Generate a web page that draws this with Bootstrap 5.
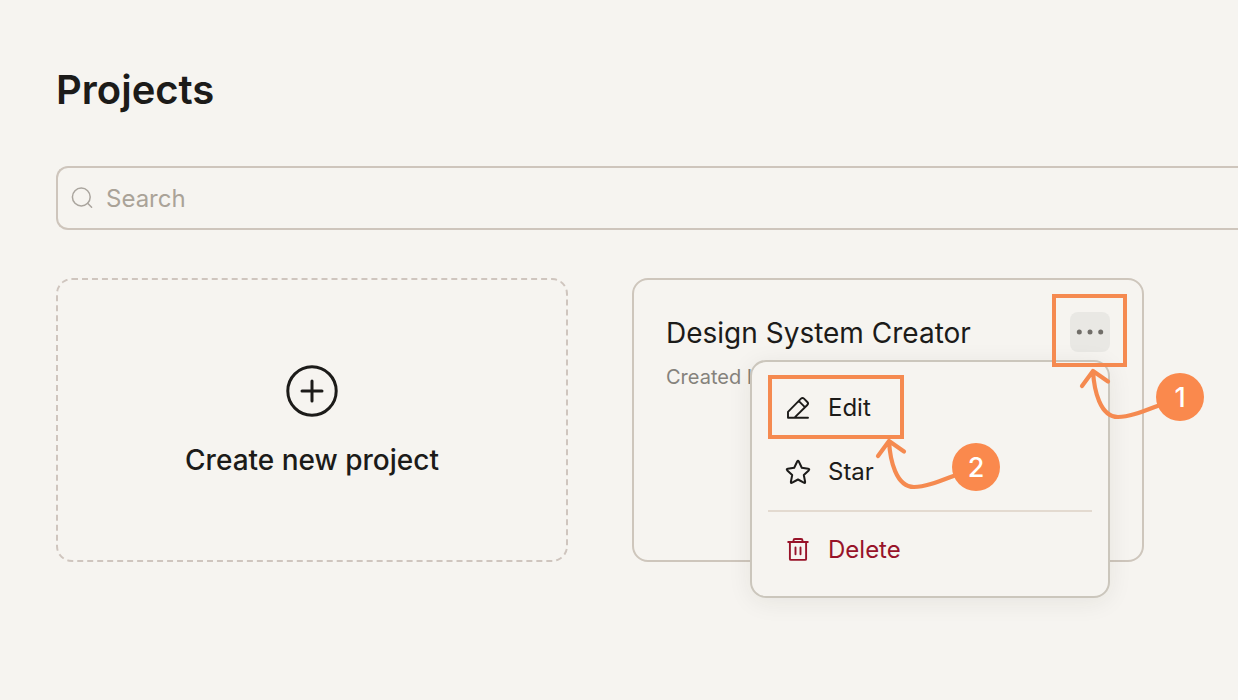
<!DOCTYPE html>
<html lang="en">
<head>
<meta charset="utf-8">
<meta name="viewport" content="width=device-width, initial-scale=1">
<title>Projects</title>
<link href="https://cdn.jsdelivr.net/npm/bootstrap@5.3.0/dist/css/bootstrap.min.css" rel="stylesheet">
<style>
  body { background: #f6f4f0; color: #1c1b19; font-family: Inter, sans-serif; height: 700px; overflow: hidden; }
  svg { display: block; flex: none; }
  .page { padding: 66px 0 0 56px; }
  .page-title { font-size: 40px; line-height: 48px; font-weight: 600; margin-bottom: 52px; }
  .search-box { height: 64px; border: 2px solid #cec5bc; border-right: 0; border-radius: 12px 0 0 12px; padding: 0 13px; margin-bottom: 48px; color: #aaa398; font-size: 24px; }
  .search-label { margin-left: 11px; padding-top: 2px; }
  .tile { width: 512px; height: 284px; border: 2px solid #cec6bc; border-radius: 16px; background: transparent; flex: none; }
  .tile-row { gap: 64px; }
  .tile-new { border-style: dashed; border-color: #cfc5be; padding-top: 84px; font-size: 28px; line-height: 34px; font-weight: 500; }
  .tile-new-label { margin-top: 25px; }
  .tile-project { padding: 32px; }
  .project-title { font-size: 28px; line-height: 42px; font-weight: 400; margin: 0; }
  .project-meta { font-size: 20px; line-height: 24px; color: #85827c; margin-top: 11px; }
  .more-btn { width: 40px; height: 40px; border-radius: 8px; background: #e9e8e4; padding: 0; border: 0; }
  .project-menu { display: block; top: 80px; left: 116px; width: 360px; height: 238px; padding: 14px 16px; border: 2px solid #cbc6bc; border-radius: 16px; background: #f6f4f0; box-shadow: 0 4px 24px rgba(40,35,25,.075); }
  .project-menu .dropdown-item { height: 64px; padding: 0 16px; gap: 16px; font-size: 24px; color: #1c1b19; }
  .project-menu .dropdown-item.danger { color: #981329; }
  .project-menu .dropdown-divider { margin: 6px 0; border-top: 2px solid #e3dad0; opacity: 1; }
  .guide { border: 4px solid #f58a50; pointer-events: none; }
  .guide-more { left: 418px; top: 14px; width: 75px; height: 73px; z-index: 1010; }
  .guide-edit { left: 134px; top: 95px; width: 136px; height: 64px; z-index: 1010; }
  .guide-step { z-index: 1020; }
  .guide-step-1 { left: 440px; top: 85px; }
  .guide-step-2 { left: 236px; top: 155px; }
  .step-num { left: 82px; top: 8px; width: 48px; height: 48px; padding-top: 2px; background: #fa894d; color: #fff; font-size: 27px; font-weight: 500; }
</style>
</head>
<body>
<main class="page">
  <h1 class="page-title">Projects</h1>

  <div class="search-box d-flex align-items-center">
    <svg width="24" height="24" viewBox="0 0 24 24" fill="none" stroke="#aaa59e" stroke-width="1.5" stroke-linecap="round"><circle cx="10.3" cy="11" r="8.900"/><path d="M16.600 17.300l4 4"/></svg>
    <span class="search-label">Search</span>
  </div>

  <div class="tile-row d-flex">
    <section class="tile tile-new d-flex flex-column align-items-center">
      <svg width="54" height="54" viewBox="0 0 54 54" fill="none" stroke="#1c1b19" stroke-width="3" stroke-linecap="round"><circle cx="27" cy="27" r="24.2"/><path d="M27 17v20M17 27h20"/></svg>
      <span class="tile-new-label">Create new project</span>
    </section>

    <section class="tile tile-project position-relative">
      <div class="d-flex justify-content-between">
        <h2 class="project-title">Design System Creator</h2>
        <button class="more-btn btn d-flex align-items-center justify-content-center" type="button" aria-label="More">
          <svg width="28" height="6" viewBox="0 0 28 6" fill="#716e69"><circle cx="3.3" cy="3" r="2.5"/><circle cx="14" cy="3" r="2.5"/><circle cx="24.7" cy="3" r="2.5"/></svg>
        </button>
      </div>
      <div class="project-meta">Created I</div>

      <div class="project-menu dropdown-menu">
        <a class="dropdown-item d-flex align-items-center" href="#">
          <svg width="28" height="28" viewBox="0 0 28 28" fill="none" stroke="currentColor" stroke-width="1.9" stroke-linejoin="round" stroke-linecap="round"><path d="M10.500 23.700H4v-5.900L17 4.700q1.500-1.500 3 0l3.300 3.300q1.500 1.500 0 3L10.500 23.700H24M14.900 7.200l6 6"/></svg>
          <span>Edit</span>
        </a>
        <a class="dropdown-item d-flex align-items-center" href="#">
          <svg width="28" height="28" viewBox="0 0 28 28" fill="none" stroke="currentColor" stroke-width="2" stroke-linejoin="round"><path d="M13.200 3.500q.8-1.600 1.600 0l3 6.300 6.400.9q1.800.4.5 1.700l-4.900 4.600 1.300 6.800q.2 1.700-1.300.9L14 21.500l-5.800 3.200q-1.500.8-1.300-.9l1.300-6.800-4.900-4.600q-1.300-1.300.5-1.700l6.400-.9z"/></svg>
          <span>Star</span>
        </a>
        <hr class="dropdown-divider">
        <a class="dropdown-item danger d-flex align-items-center" href="#">
          <svg width="28" height="28" viewBox="0 0 28 28" fill="none" stroke="currentColor" stroke-width="1.9" stroke-linejoin="round" stroke-linecap="round"><path d="M4.200 6h19.600M5.900 6v16.900q0 1 1 1h14.200q1 0 1-1V6M9.500 6V4.500q0-1.500 1.500-1.500h6q1.500 0 1.500 1.500V6M11.500 11.500v6.800M16.500 11.500v6.800"/></svg>
          <span>Delete</span>
        </a>
      </div>

      <div class="guide guide-more position-absolute"></div>
      <div class="guide guide-edit position-absolute"></div>
      <div class="guide-step guide-step-1 position-absolute">
        <svg width="90" height="60" viewBox="0 0 90 60" fill="none" stroke="#f58a50" stroke-width="4.200" stroke-linecap="round" stroke-linejoin="round"><path d="M8 21L19 6l15 10.500M19 6C20 25 26 52 44 52C56 52 70 46 86 40"/></svg>
        <div class="step-num position-absolute rounded-circle d-flex align-items-center justify-content-center">1</div>
      </div>
      <div class="guide-step guide-step-2 position-absolute">
        <svg width="90" height="60" viewBox="0 0 90 60" fill="none" stroke="#f58a50" stroke-width="4.200" stroke-linecap="round" stroke-linejoin="round"><path d="M8 21L19 6l15 10.500M19 6C20 25 26 52 44 52C56 52 70 46 86 40"/></svg>
        <div class="step-num position-absolute rounded-circle d-flex align-items-center justify-content-center">2</div>
      </div>
    </section>
  </div>
</main>
<script src="https://cdn.jsdelivr.net/npm/bootstrap@5.3.0/dist/js/bootstrap.bundle.min.js"></script>
</body>
</html>
